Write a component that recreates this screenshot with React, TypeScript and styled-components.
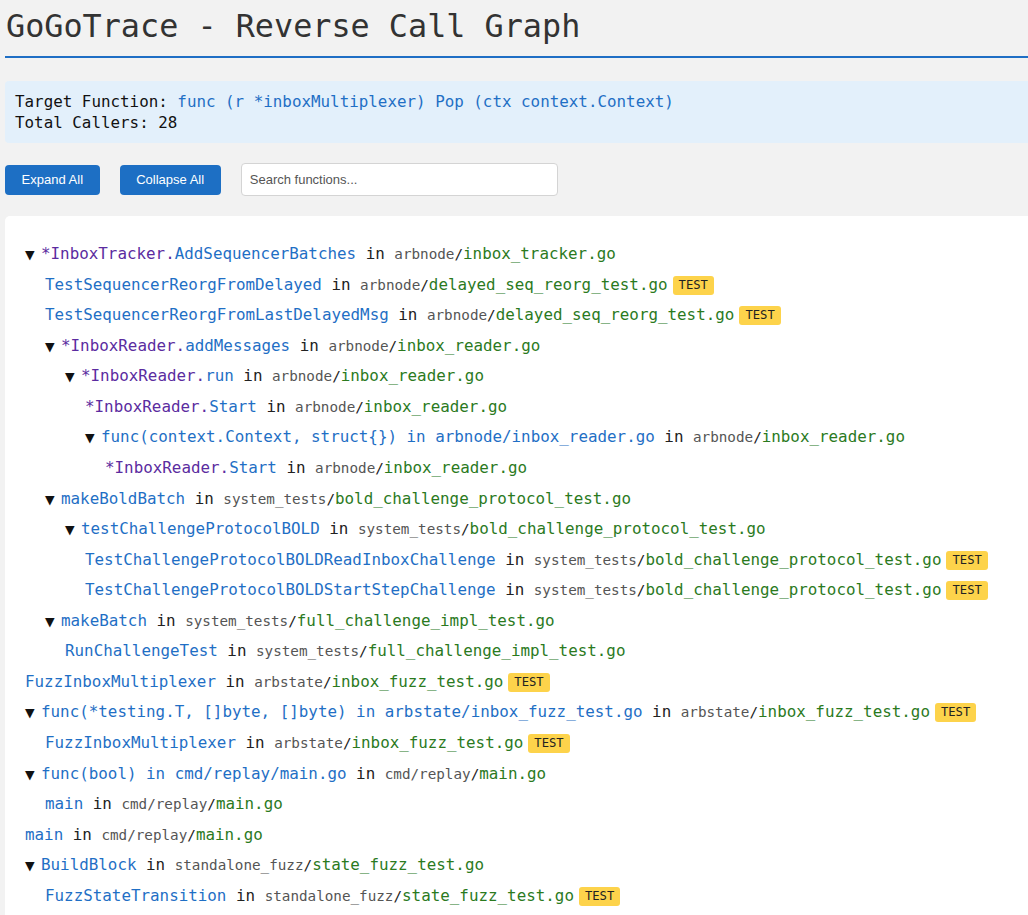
import React from "react";
import styled, { createGlobalStyle } from "styled-components";

const GlobalStyle = createGlobalStyle`
  html, body { margin: 0; padding: 0; }
  body {
    background: #f2f2f2;
    font-family: "DejaVu Sans Mono", "Liberation Mono", monospace;
    color: #222;
  }
`;

const Page = styled.div`
  padding: 7px 0 0 5px;
  min-height: 915px;
  box-sizing: border-box;
  display: flex;
  flex-direction: column;
`;

const Title = styled.h1`
  margin: 0;
  font-size: 31.8px;
  font-weight: normal;
  line-height: 37px;
  color: #333;
  padding: 0 0 12px 1px;
  border-bottom: 2px solid #1f6fc5;
`;

const InfoBox = styled.div`
  margin-top: 23px;
  background: #e3f0fb;
  border-radius: 4px 0 0 4px;
  padding: 10px 10px;
  font-size: 15.86px;
  line-height: 21px;
  color: #111;
`;

const InfoLine = styled.div``;

const Sig = styled.span`
  color: #1f6fc5;
`;

const Toolbar = styled.div`
  margin-top: 20px;
  display: flex;
  align-items: center;
  gap: 20px;
`;

const Button = styled.button`
  height: 30px;
  padding: 0 16.6px;
  border: none;
  border-radius: 4px;
  background: #1d6fc4;
  color: #fff;
  font-family: "Liberation Sans", Arial, sans-serif;
  font-size: 13px;
  cursor: pointer;
`;

const Search = styled.input`
  width: 317px;
  height: 33px;
  box-sizing: border-box;
  border: 1px solid #d4d4d4;
  border-radius: 4px;
  padding: 0 8px;
  font-family: "Liberation Sans", Arial, sans-serif;
  font-size: 13px;
  background: #fff;
  color: #333;
  &::placeholder { color: #555; }
`;

const TreePanel = styled.div`
  margin-top: 20px;
  flex: 1;
  background: #fff;
  border-radius: 5px 0 0 0;
  padding: 23px 0 0 20px;
  font-size: 15.86px;
`;

const Row = styled.div`
  height: 22.57px;
  padding: 4px 0;
  line-height: 22.57px;
  white-space: nowrap;
  overflow: visible;
`;

const Children = styled.div`
  padding-left: 20px;
`;

const Toggle = styled.span`
  display: inline-block;
  width: 16px;
  font-family: "DejaVu Sans", sans-serif;
  font-size: 12.5px;
  line-height: 10px;
  color: #111;
`;

const Recv = styled.span`
  color: #5b2ca0;
`;

const Name = styled.span`
  color: #1f6fc5;
`;

const In = styled.span`
  color: #222;
`;

const Dir = styled.span`
  font-size: 0.9em;
  line-height: 10px;
  color: #555;
`;

const Slash = styled.span`
  color: #222;
`;

const File = styled.span`
  color: #2b7a1e;
`;

const Badge = styled.span`
  display: inline-block;
  margin-left: 5px;
  padding: 2px 6px;
  border-radius: 3px;
  background: #fdd34b;
  color: #222;
  font-size: 12.2px;
  line-height: 15px;
  vertical-align: 1px;
`;

type Node = {
  recv?: string;
  name: string;
  dir: string;
  file: string;
  test?: boolean;
  children?: Node[];
};

const tree: Node[] = [
  {
    recv: "*InboxTracker.",
    name: "AddSequencerBatches",
    dir: "arbnode",
    file: "inbox_tracker.go",
    children: [
      { name: "TestSequencerReorgFromDelayed", dir: "arbnode", file: "delayed_seq_reorg_test.go", test: true },
      { name: "TestSequencerReorgFromLastDelayedMsg", dir: "arbnode", file: "delayed_seq_reorg_test.go", test: true },
      {
        recv: "*InboxReader.",
        name: "addMessages",
        dir: "arbnode",
        file: "inbox_reader.go",
        children: [
          {
            recv: "*InboxReader.",
            name: "run",
            dir: "arbnode",
            file: "inbox_reader.go",
            children: [
              { recv: "*InboxReader.", name: "Start", dir: "arbnode", file: "inbox_reader.go" },
              {
                name: "func(context.Context, struct{}) in arbnode/inbox_reader.go",
                dir: "arbnode",
                file: "inbox_reader.go",
                children: [{ recv: "*InboxReader.", name: "Start", dir: "arbnode", file: "inbox_reader.go" }],
              },
            ],
          },
        ],
      },
      {
        name: "makeBoldBatch",
        dir: "system_tests",
        file: "bold_challenge_protocol_test.go",
        children: [
          {
            name: "testChallengeProtocolBOLD",
            dir: "system_tests",
            file: "bold_challenge_protocol_test.go",
            children: [
              { name: "TestChallengeProtocolBOLDReadInboxChallenge", dir: "system_tests", file: "bold_challenge_protocol_test.go", test: true },
              { name: "TestChallengeProtocolBOLDStartStepChallenge", dir: "system_tests", file: "bold_challenge_protocol_test.go", test: true },
            ],
          },
        ],
      },
      {
        name: "makeBatch",
        dir: "system_tests",
        file: "full_challenge_impl_test.go",
        children: [{ name: "RunChallengeTest", dir: "system_tests", file: "full_challenge_impl_test.go" }],
      },
    ],
  },
  { name: "FuzzInboxMultiplexer", dir: "arbstate", file: "inbox_fuzz_test.go", test: true },
  {
    name: "func(*testing.T, []byte, []byte) in arbstate/inbox_fuzz_test.go",
    dir: "arbstate",
    file: "inbox_fuzz_test.go",
    test: true,
    children: [{ name: "FuzzInboxMultiplexer", dir: "arbstate", file: "inbox_fuzz_test.go", test: true }],
  },
  {
    name: "func(bool) in cmd/replay/main.go",
    dir: "cmd/replay",
    file: "main.go",
    children: [{ name: "main", dir: "cmd/replay", file: "main.go" }],
  },
  { name: "main", dir: "cmd/replay", file: "main.go" },
  {
    name: "BuildBlock",
    dir: "standalone_fuzz",
    file: "state_fuzz_test.go",
    children: [{ name: "FuzzStateTransition", dir: "standalone_fuzz", file: "state_fuzz_test.go", test: true }],
  },
];

function TreeNode({ node }: { node: Node }) {
  const hasKids = !!node.children && node.children.length > 0;
  return (
    <>
      <Row>
        {hasKids && <Toggle>▼</Toggle>}
        {node.recv && <Recv>{node.recv}</Recv>}
        <Name>{node.name}</Name>
        <In> in </In>
        <Dir>
          {node.dir}
          <Slash>/</Slash>
        </Dir>
        <File>{node.file}</File>
        {node.test && <Badge>TEST</Badge>}
      </Row>
      {hasKids && (
        <Children>
          {node.children!.map((c, i) => (
            <TreeNode key={i} node={c} />
          ))}
        </Children>
      )}
    </>
  );
}

export default function App() {
  return (
    <>
      <GlobalStyle />
      <Page>
        <Title>GoGoTrace - Reverse Call Graph</Title>
        <InfoBox>
          <InfoLine>
            Target Function: <Sig>func (r *inboxMultiplexer) Pop (ctx context.Context)</Sig>
          </InfoLine>
          <InfoLine>Total Callers: 28</InfoLine>
        </InfoBox>
        <Toolbar>
          <Button>Expand All</Button>
          <Button>Collapse All</Button>
          <Search placeholder="Search functions..." />
        </Toolbar>
        <TreePanel>
          {tree.map((n, i) => (
            <TreeNode key={i} node={n} />
          ))}
        </TreePanel>
      </Page>
    </>
  );
}
